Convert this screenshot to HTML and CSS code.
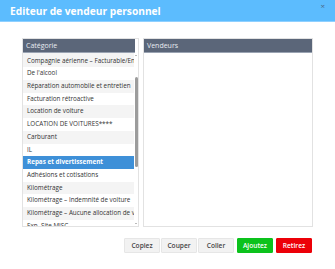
FILE: index.html
```html
<!DOCTYPE html>
<html lang="fr">
<head>
<meta charset="utf-8">
<link rel="stylesheet" href="styles.css">
</head>
<body>
<div class="dialog">
  <div class="titlebar">
    <span class="title">Editeur de vendeur personnel</span>
    <span class="close">×</span>
  </div>
  <div class="content">
    <div class="panels">
      <div class="panel left">
        <div class="phead">Catégorie</div>
        <div class="pbody">
          <ul class="list">
            <li class="g first">Compagnie</li>
            <li class="g">Compagnie aérienne – Facturable/En</li>
            <li>De l'alcool</li>
            <li class="g">Réparation automobile et entretien</li>
            <li>Facturation rétroactive</li>
            <li class="g">Location de voiture</li>
            <li>LOCATION DE VOITURES****</li>
            <li class="g">Carburant</li>
            <li>IL</li>
            <li class="sel">Repas et divertissement</li>
            <li>Adhésions et cotisations</li>
            <li class="g">Kilométrage</li>
            <li>Kilométrage – Indemnité de voiture</li>
            <li class="g">Kilométrage – Aucune allocation de v</li>
            <li>Exp. Site MISC</li>
          </ul>
          <div class="scrollbar">
            <span class="arrow up"></span>
            <span class="track"><span class="thumb"></span></span>
            <span class="arrow down"></span>
          </div>
        </div>
      </div>
      <div class="panel right">
        <div class="phead">Vendeurs</div>
        <div class="pbody"></div>
      </div>
    </div>
    <div class="buttons">
      <button class="btn">Copiez</button>
      <button class="btn">Couper</button>
      <button class="btn">Coller</button>
      <button class="btn add">Ajoutez</button>
      <button class="btn del">Retirez</button>
    </div>
  </div>
</div>
</body>
</html>
```
FILE: styles.css
```css
* { box-sizing: border-box; }
html, body { margin: 0; padding: 0; background: #fff; }
body { font-family: "Open Sans", "Noto Sans", sans-serif; width: 335px; height: 269px; overflow: hidden; }

.titlebar {
  height: 22px;
  background: #5cbcfe;
  display: flex;
  align-items: center;
  justify-content: space-between;
  padding: 0 10px 0 10px;
  border-bottom: 1px solid #8fd0ff;
}
.title { color: #fff; font-weight: 700; font-size: 10.2px; letter-spacing: 0; }
.close { color: #445; font-size: 8px; line-height: 1; align-self: flex-start; margin-top: 2px; opacity: 0.7; }

.content { padding: 16px 22px 0 22px; }
.panels { display: flex; gap: 4px; height: 189px; }
.panel { border: 1px solid #e2e2e2; display: flex; flex-direction: column; }
.panel.left { width: 117px; }
.panel.right { width: 170px; }
.phead {
  height: 14px;
  background: #5b6679;
  border-bottom: 1px solid #9aa3b2;
  color: #e8ecf2;
  font-size: 7px;
  line-height: 13px;
  padding-left: 3px;
  flex: none;
}
.left .phead { margin-right: 3px; }
.pbody { flex: 1; display: flex; overflow: hidden; }

.list { list-style: none; margin: 0; padding: 0; flex: 1; overflow: hidden; }
.list li {
  height: 12.7px;
  line-height: 12.7px;
  font-size: 6.3px;
  color: #333;
  padding-left: 4px;
  white-space: nowrap;
  overflow: hidden;
}
.list li.first { margin-top: -11px; }
.list li.g { background: #f4f4f4; }
.list li.sel { background: #3e90d8; color: #fff; font-weight: 700; }

.scrollbar { width: 4px; display: flex; flex-direction: column; align-items: center; background: #fff; flex: none; }
.arrow { width: 0; height: 0; border-left: 1.3px solid transparent; border-right: 1.3px solid transparent; flex: none; }
.arrow.up { border-bottom: 1.5px solid #777; margin: 2px 0 1px; }
.arrow.down { border-top: 1.5px solid #777; margin: 1px 0 2px; }
.track { flex: 1; width: 3px; display: flex; flex-direction: column; }
.thumb { width: 3px; height: 90px; margin-top: 20px; background: #9c9c9c; border-radius: 1.5px; }

.buttons { display: flex; justify-content: flex-end; margin-top: 11px; padding-right: 1px; }
.btn {
  font-family: "Open Sans", "Noto Sans", sans-serif;
  font-size: 6.6px;
  font-weight: 600;
  color: #444;
  background: #f2f2f2;
  border: 1px solid #e6e6e6;
  height: 15px;
  width: 36px;
  padding: 0;
  margin-left: 1px;
  border-radius: 1px;
}
.btn.add { background: #0cc21c; border-color: #0cc21c; color: #fff; margin-left: 3px; }
.btn.del { background: #ec0008; border-color: #ec0008; color: #fff; margin-left: 3px; }
```
